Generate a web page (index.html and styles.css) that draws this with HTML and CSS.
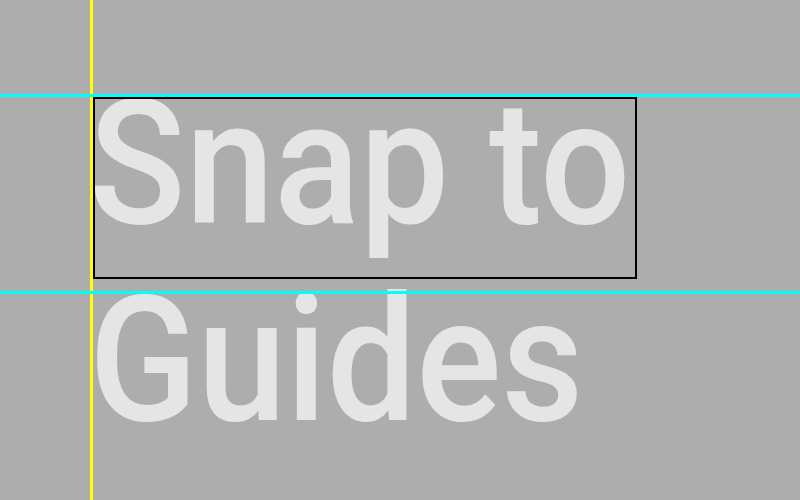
FILE: index.html
```html
<!DOCTYPE html>
<html>
<head>
<meta charset="utf-8">
<link rel="stylesheet" href="styles.css">
</head>
<body>
<div class="canvas">
  <div class="text-block">Snap to<br>Guides</div>
  <div class="text-frame"></div>
  <div class="guide guide-v"></div>
  <div class="guide guide-h guide-h1"></div>
  <div class="guide guide-h guide-h2"></div>
</div>
</body>
</html>
```
FILE: styles.css
```css
html, body {
  margin: 0;
  padding: 0;
  background: #adadad;
}
.canvas {
  position: relative;
  width: 800px;
  height: 500px;
  overflow: hidden;
  background: #adadad;
}
.text-block {
  position: absolute;
  left: 89px;
  top: 65px;
  font-family: Roboto, "Liberation Sans", sans-serif;
  font-weight: 500;
  font-size: 174px;
  line-height: 197px;
  color: #e5e5e5;
  white-space: nowrap;
  transform: scaleX(0.915);
  transform-origin: 0 0;
}
.text-frame {
  position: absolute;
  left: 93px;
  top: 97px;
  width: 540px;
  height: 178px;
  border: 2px solid #000;
}
.guide {
  position: absolute;
}
.guide-v {
  left: 90px;
  top: 0;
  width: 3px;
  height: 500px;
  background: #ffff00;
}
.guide-h {
  left: 0;
  width: 800px;
  height: 3px;
  background: #00ffff;
}
.guide-h1 { top: 94px; }
.guide-h2 { top: 291px; }
```
